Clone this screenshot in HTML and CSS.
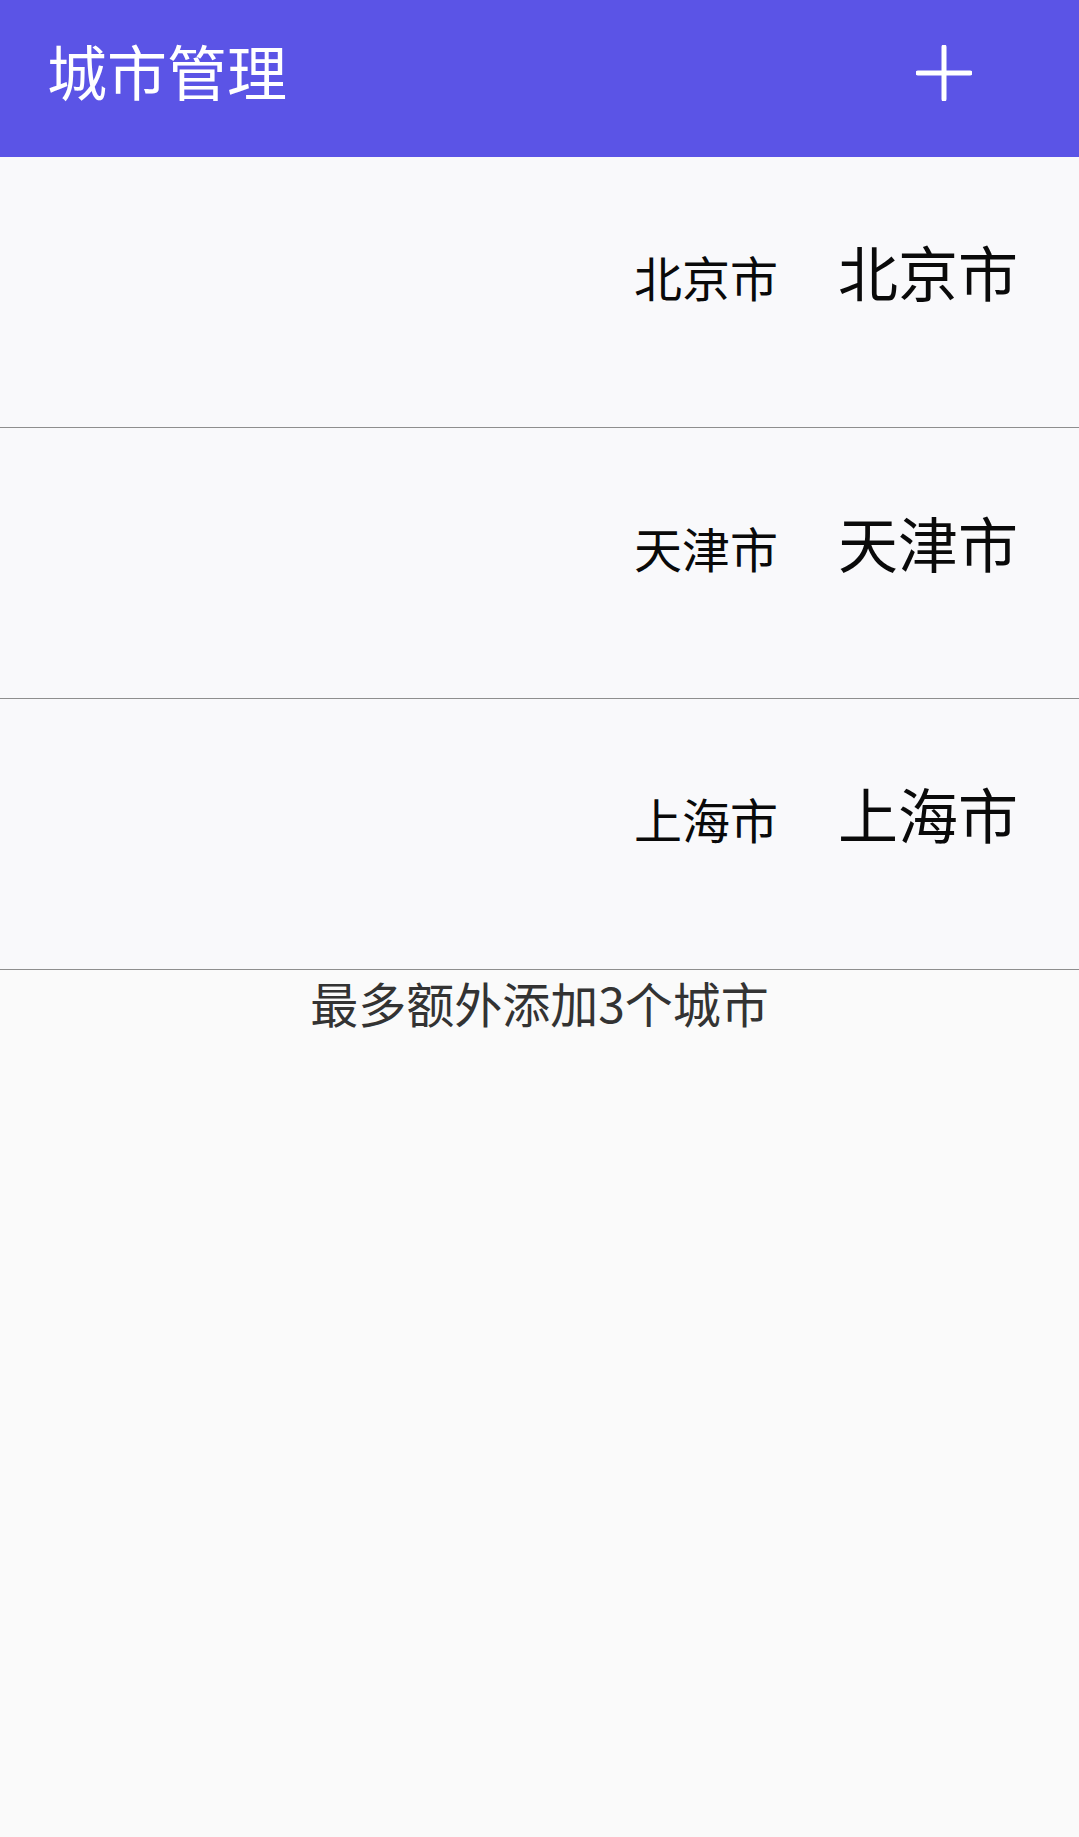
FILE: index.html
```html
<!DOCTYPE html>
<html lang="zh-CN">
<head>
<meta charset="utf-8">
<title>城市管理</title>
<link rel="stylesheet" href="styles.css">
</head>
<body>
<header class="appbar">
  <h1 class="appbar-title">城市管理</h1>
  <button class="add-btn" aria-label="添加">
    <svg viewBox="0 0 56 56" width="56" height="56">
      <path d="M28 2V54M2 28H54" stroke="#ffffff" stroke-width="5" stroke-linecap="round" fill="none"/>
    </svg>
  </button>
</header>
<main class="city-list">
  <div class="city-row">
    <div class="city-names">
      <span class="city-small">北京市</span>
      <span class="city-large">北京市</span>
    </div>
  </div>
  <div class="city-row">
    <div class="city-names">
      <span class="city-small">天津市</span>
      <span class="city-large">天津市</span>
    </div>
  </div>
  <div class="city-row">
    <div class="city-names">
      <span class="city-small">上海市</span>
      <span class="city-large">上海市</span>
    </div>
  </div>
  <p class="hint">最多额外添加3个城市</p>
</main>
</body>
</html>
```
FILE: styles.css
```css
html, body {
  margin: 0;
  padding: 0;
}
body {
  background: #fafafa;
  font-family: "Noto Sans CJK SC", "Noto Sans", sans-serif;
  width: 1079px;
  min-height: 1837px;
}
.appbar {
  height: 157px;
  background: #5b54e6;
  display: flex;
  align-items: center;
  justify-content: space-between;
  padding: 0 107px 11px 47px;
  box-sizing: border-box;
}
.appbar-title {
  margin: 0 0 7px 0;
  color: #ffffff;
  font-size: 60px;
  font-weight: 400;
  line-height: 1;
}
.add-btn {
  border: 0;
  background: none;
  padding: 0;
  width: 56px;
  height: 56px;
  display: flex;
}
.city-list {
  display: flex;
  flex-direction: column;
}
.city-row {
  height: 271px;
  box-sizing: border-box;
  background: #f9f9fb;
  border-bottom: 1.5px solid #8e8e8e;
  display: flex;
  justify-content: flex-end;
  align-items: center;
  padding: 0 61px 42px 0;
}
.city-names {
  display: flex;
  align-items: baseline;
  gap: 60px;
  color: #0a0a0a;
  line-height: 1;
}
.city-small {
  font-size: 48px;
}
.city-large {
  font-size: 60px;
}
.hint {
  margin: 0;
  text-align: center;
  font-size: 48px;
  line-height: 64px;
  color: #333333;
}
```
